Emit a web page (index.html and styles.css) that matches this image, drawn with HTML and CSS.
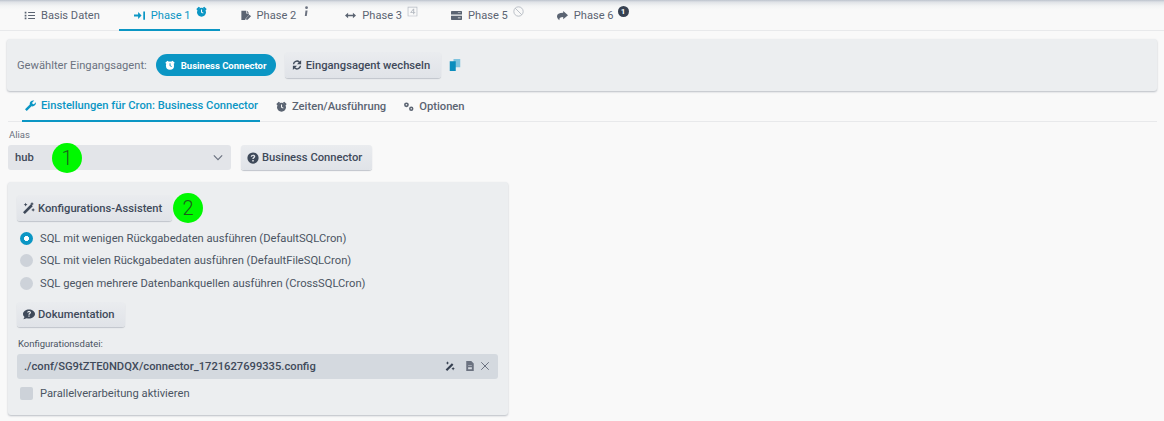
FILE: index.html
```html
<!DOCTYPE html>
<html lang="de">
<head>
<meta charset="utf-8">
<title>Phase 1</title>
<link rel="stylesheet" href="styles.css">
</head>
<body>
<nav class="tabs">
  <a class="tab"><svg class="ic" viewBox="0 0 16 16"><path d="M1 2.500h2.500V5H1zM1 6.800h2.500v2.500H1zM1 11h2.500v2.500H1zM6 3h10v1.500H6zM6 7.300h10v1.500H6zM6 11.500h10V13H6z"/></svg>Basis Daten</a>
  <a class="tab active"><svg class="ic" viewBox="0 0 16 16"><path d="M0 6.500h6V3l5 5-5 5V9.500H0zM13.500 2H16v12h-2.500z"/></svg>Phase 1<svg class="sup" viewBox="0 0 16 16"><circle cx="8" cy="9" r="6.500"/><path d="M.5 4.500L4 1l2 1.500L2 6.500zM15.500 4.500L12 1l-2 1.500 4 4z"/><path class="cut" d="M7.300 5h1.500v3.700l2.200 1.200-.7 1.100-3-1.700z"/></svg></a>
  <a class="tab"><svg class="ic" viewBox="0 0 16 16"><path d="M2 1h7v4h4v2.500l-4.500 4.500-1 2.500H2zM10 1l3 3h-3z"/><path d="M9 12l5-5 2 2-5 5H9z"/></svg>Phase 2<svg class="sup info" viewBox="0 0 16 16"><circle cx="9.500" cy="2.500" r="2"/><path d="M8 6.500h3l-1.200 8H7z"/></svg></a>
  <a class="tab"><svg class="ic" viewBox="0 0 16 16"><path d="M0 8l4.500-4v3h7V4L16 8l-4.500 4V9h-7v3z"/></svg>Phase 3<svg class="sup light" viewBox="0 0 16 16"><path fill-rule="evenodd" d="M1 1h14v14H1zM2 2v12h12V2z"/><path d="M9 4h1.500v5H12v1h-1.500v2H9v-2H5V9zM9 5.800L6.300 9H9z"/></svg></a>
  <a class="tab"><svg class="ic" viewBox="0 0 16 16"><path fill-rule="evenodd" d="M1 1.500h14a1 1 0 0 1 1 1v4H0v-4a1 1 0 0 1 1-1zM10 3.500v1h4v-1zM0 8.500h16v5a1 1 0 0 1-1 1H1a1 1 0 0 1-1-1zM10 11v1h4v-1z"/></svg>Phase 5<svg class="sup light" viewBox="0 0 16 16"><circle cx="8" cy="8" r="6.800" fill="none" stroke="currentColor" stroke-width="1.300"/><path d="M3.200 3.200l9.600 9.600" stroke="currentColor" stroke-width="1.300"/></svg></a>
  <a class="tab"><svg class="ic" viewBox="0 0 16 16"><path d="M9 1.500l7 6-7 6V10C5 10 3 11 3.500 15 1 13 0 11 0 9c0-3 3-5 9-5z"/></svg>Phase 6<span class="count">1</span></a>
</nav>

<section class="agent-bar">
  <span class="agent-label">Gewählter Eingangsagent:</span>
  <span class="pill"><svg class="pill-ic" viewBox="0 0 16 16"><circle cx="8" cy="9" r="6.500"/><path d="M.5 4.500L4 1l2 1.500L2 6.500zM15.500 4.500L12 1l-2 1.500 4 4z"/><path class="cut-blue" d="M7.300 5h1.500v3.700l2.200 1.200-.7 1.100-3-1.700z"/></svg>Business Connector</span>
  <button class="btn swap"><svg class="ic" viewBox="0 0 16 16"><path d="M2.500 7a5.500 5.500 0 0 1 9.200-3.700L13.500 1.500v5.500H8l2.300-2.300A3.700 3.700 0 0 0 4.300 7zM13.500 9a5.500 5.500 0 0 1-9.200 3.700L2.500 14.500V9H8l-2.300 2.300A3.700 3.700 0 0 0 11.700 9z"/></svg>Eingangsagent wechseln</button>
  <svg class="copy" viewBox="0 0 16 16"><path class="copy-back" d="M6 0h9v11H6z"/><path d="M1 3h8v13H1z"/></svg>
</section>

<nav class="subtabs">
  <a class="subtab active"><svg class="ic" viewBox="0 0 16 16"><path d="M0 13.500L7 6.500C6.300 3 9 0 13.500 .8L10.500 3.800l.5 1.900 1.900.5 3-3C16.500 7.500 13 10 9.500 9.200L2.500 16z"/></svg>Einstellungen für Cron: Business Connector</a>
  <a class="subtab"><svg class="ic" viewBox="0 0 16 16"><circle cx="8" cy="9" r="6.500"/><path d="M.5 4.500L4 1l2 1.500L2 6.500zM15.500 4.500L12 1l-2 1.500 4 4z"/><path class="cut" d="M7.300 5h1.500v3.700l2.200 1.200-.7 1.100-3-1.700z"/></svg>Zeiten/Ausführung</a>
  <a class="subtab"><svg class="ic" viewBox="0 0 16 16"><path fill-rule="evenodd" d="M5 2a3.500 3.500 0 1 1 0 7 3.500 3.500 0 0 1 0-7zM5 4.300a1.200 1.200 0 1 0 0 2.400 1.200 1.200 0 0 0 0-2.400zM12 8a3.200 3.200 0 1 1 0 6.400A3.200 3.200 0 0 1 12 8zM12 10.200a1 1 0 1 0 0 2 1 1 0 0 0 0-2z"/></svg>Optionen</a>
</nav>

<main class="content">
  <label class="field-label">Alias</label>
  <div class="alias-row">
    <div class="select">
      <span>hub</span>
      <svg class="chev" viewBox="0 0 12 8"><path d="M1 1.500l5 5 5-5" fill="none" stroke="#6b7280" stroke-width="1.400"/></svg>
      <span class="marker m1">1</span>
    </div>
    <button class="btn bc"><svg class="ic" viewBox="0 0 16 16"><path fill-rule="evenodd" d="M8 .5a7.500 7.500 0 1 1 0 15 7.500 7.500 0 0 1 0-15zM7 10.500v2h2v-2zM8 3.500c-1.800 0-3 1-3 2.700h1.800c0-.7.500-1.100 1.200-1.100s1.100.4 1.100 1c0 1.100-2 1.200-2 3.300h1.800c0-1.500 2.100-1.700 2.100-3.500 0-1.500-1.200-2.400-3-2.400z"/></svg>Business Connector</button>
  </div>

  <section class="card">
    <div class="wizard-row">
      <button class="btn wizard"><svg class="ic" viewBox="0 0 16 16"><path d="M0 13.500L10.500 3l2.500 2.500L2.500 16zM12 0l.9 1.600 1.600.9-1.600.9-.9 1.600-.9-1.600-1.600-.9 1.600-.9zM3.500 1l.8 1.700L6 3.500l-1.700.8L3.500 6l-.8-1.700L1 3.500l1.700-.8zM13.500 8l.8 1.700 1.700.8-1.700.8-.8 1.700-.8-1.700-1.700-.8 1.700-.8z"/></svg>Konfigurations-Assistent</button>
      <span class="marker m2">2</span>
    </div>
    <div class="radio-line checked"><span class="radio"></span>SQL mit wenigen Rückgabedaten ausführen (DefaultSQLCron)</div>
    <div class="radio-line"><span class="radio"></span>SQL mit vielen Rückgabedaten ausführen (DefaultFileSQLCron)</div>
    <div class="radio-line"><span class="radio"></span>SQL gegen mehrere Datenbankquellen ausführen (CrossSQLCron)</div>
    <button class="btn doc"><svg class="ic" viewBox="0 0 16 16"><path fill-rule="evenodd" d="M8 2c4 0 8 2.500 8 6s-4 6-8 6c-1 0-2-.2-3-.5L.5 15l1.500-3C.8 11 0 9.500 0 8 0 4.500 4 2 8 2zM7.200 10v1.500h1.600V10zM8 4C6.500 4 5.500 4.800 5.500 6h1.500c0-.4.4-.7 1-.7s1 .3 1 .7c0 .8-1.800 1-1.800 3h1.600c0-1.200 1.900-1.400 1.900-3C10.700 4.800 9.500 4 8 4z"/></svg>Dokumentation</button>
    <label class="field-label file-label">Konfigurationsdatei:</label>
    <div class="file-input">
      <span>./conf/SG9tZTE0NDQX/connector_1721627699335.config</span>
      <span class="file-icons">
        <svg class="fi dark" viewBox="0 0 16 16"><path d="M1 13.500L11 3.500l2.500 2.500-10 10zM4 .5l.9 1.800 1.800.9-1.800.9L4 6 3.100 4.100 1.300 3.200l1.800-.9zM13 9.500l.9 1.800 1.800.9-1.800.9-.9 1.900-.9-1.900-1.800-.9 1.800-.9z"/></svg>
        <svg class="fi doc-ic" viewBox="0 0 16 16"><path fill-rule="evenodd" d="M2 0h8l4 4v12H2zM5 7v1h6V7zM5 10v3h6v-3z"/></svg>
        <svg class="fi" viewBox="0 0 16 16"><path d="M2 2l12 12M14 2L2 14" stroke="#6b7280" stroke-width="1.600" fill="none"/></svg>
      </span>
    </div>
    <div class="check-line"><span class="check"></span>Parallelverarbeitung aktivieren</div>
  </section>
</main>
</body>
</html>
```

FILE: styles.css
```css
* { box-sizing: border-box; }
html, body { margin: 0; height: 421px; overflow: hidden; }
body {
  background: linear-gradient(#bcc3cd 0, #dfe2e7 2px, #f3f4f5 6px, #f9f9f9 10px) no-repeat, #f9f9f9;
  background-size: 100% 12px, auto;
  font-family: Roboto, "Liberation Sans", sans-serif;
  color: #4b5563;
  font-size: 12px;
}
svg { fill: currentColor; flex: none; }
.ic { width: 11px; height: 11px; }

.tabs { display: flex; gap: 5px; height: 31px; padding-left: 9px; border-bottom: 1px solid #e8e9eb; }
.tab { display: flex; align-items: center; gap: 6px; height: 31px; padding: 0 13px 0 15px; color: #5b6472; font-size: 11.100px; white-space: nowrap; }
.tab:first-child { margin-right: 1px; }
.tab.active { color: #0b96c4; border-bottom: 2px solid #0b96c4; padding-top: 2px; }
.tab .sup { width: 11px; height: 11px; margin: -9px 0 0 -1px; }
.tab .sup.info { color: #6b7280; margin-left: -2px; margin-right: 1px; }
.sup.light { color: #b4b9c1; }
.cut { fill: #f9f9f9; }
.cut-blue { fill: #0b96c4; }
.count { width: 11px; height: 11px; margin: -9px 0 0 -2px; border-radius: 50%; background: #374151; color: #fff; font-size: 8px; font-weight: 700; display: flex; align-items: center; justify-content: center; }

.agent-bar { display: flex; align-items: center; height: 52px; margin: 8px 0 0 7px; width: 1150px; padding-left: 10px; background: #eceef0; border-radius: 3px; box-shadow: 0 1px 2px #b9bdc4; }
.agent-label { font-size: 11.200px; color: #6b7280; margin-right: 9px; white-space: nowrap; }
.pill { display: flex; align-items: center; gap: 6px; width: 120px; height: 22px; padding-left: 9px; border-radius: 11px; background: #0b96c4; color: #fff; font-size: 9.500px; font-weight: 700; margin-right: 9px; white-space: nowrap; }
.pill-ic { width: 10px; height: 10px; }
.btn { display: inline-flex; align-items: center; gap: 3px; height: 25px; padding: 0 6px; border: 0; border-radius: 3px; background: linear-gradient(#eaecef, #e0e3e8); box-shadow: 0 1px 1px #c0c4cb; font: 500 11.200px Roboto, sans-serif; color: #3f4a5a; white-space: nowrap; }
.btn .ic { width: 12px; height: 12px; flex: none; }
.swap { margin-right: 8px; width: 156px; height: 26px; }
.copy { width: 12px; height: 12px; color: #0b8dbd; }
.copy-back { fill: #7fc3de; }

.subtabs { display: flex; height: 31px; margin-left: 8px; padding-left: 14px; width: 1149px; border-bottom: 1px solid #e8e9eb; }
.subtab { display: flex; align-items: center; gap: 5px; height: 31px; padding-bottom: 1px; font-weight: 500; color: #5b6472; font-size: 11.200px; margin-right: 16px; white-space: nowrap; }
.subtab.active { color: #0b96c4; border-bottom: 2px solid #0b96c4; padding: 0 2px 0 3px; }
.subtab:last-child { margin-left: 1px; }

.content { padding: 7px 0 0 8px; }
.field-label { display: block; font-size: 9.500px; color: #6b7280; padding-left: 1px; }
.alias-row { display: flex; gap: 10px; margin-top: 5px; }
.select { position: relative; display: flex; align-items: center; justify-content: space-between; width: 223px; height: 25px; padding: 0 8px 0 7px; background: #e3e5e9; border-radius: 3px; font-weight: 500; color: #3f4a5a; font-size: 11.200px; }
.chev { width: 10px; height: 7px; }
.bc { width: 131px; }
.marker { width: 30px; height: 30px; border-radius: 50%; background: #00f800; color: #1c5c1c; font-size: 20px; font-weight: 300; display: flex; align-items: center; justify-content: center; flex: none; }
.m1 { position: absolute; left: 44px; top: -2px; }
.card { width: 500px; height: 233px; margin-top: 12px; padding: 13px 10px 0 9px; background: #eceef0; border-radius: 3px; box-shadow: 0 1px 2px #b9bdc4; display: flex; flex-direction: column; }
.wizard-row { display: flex; align-items: center; gap: 1px; height: 26px; margin-bottom: 6px; }
.wizard { width: 155px; height: 26px; }
.radio-line, .check-line { display: flex; align-items: center; gap: 7px; height: 22.500px; padding-left: 3px; font-size: 11.200px; color: #4b5563; white-space: nowrap; }
.radio { width: 13px; height: 13px; border-radius: 50%; background: #cdd2d9; }
.checked .radio { background: radial-gradient(circle, #fff 2.200px, #0b96c4 2.800px); }
.doc { align-self: flex-start; margin-top: 7px; width: 108px; }
.file-label { margin: 11px 0 0; color: #4b5563; }
.file-input { display: flex; align-items: center; justify-content: space-between; height: 25px; margin-top: 5px; padding: 0 8px 0 7px; background: #d4d9df; border-radius: 3px; color: #3f4a5a; font-size: 11.200px; font-weight: 500; white-space: nowrap; }
.file-icons { display: flex; align-items: center; gap: 5px; }
.fi { width: 10px; height: 10px; color: #6b7280; }
.fi.dark { color: #374151; margin-right: 5px; }
.check-line { margin-top: 4px; }
.check { width: 13px; height: 13px; border-radius: 2px; background: #cdd2d9; }
```
